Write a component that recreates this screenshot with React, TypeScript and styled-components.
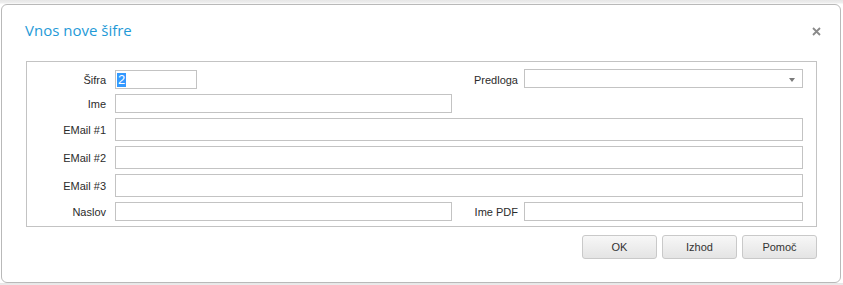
import React from "react";
import styled, { createGlobalStyle } from "styled-components";

const Global = createGlobalStyle`
  html, body { margin: 0; padding: 0; }
  body {
    background: linear-gradient(#e6e6e6 0, #efefef 3px, #ffffff 4px);
    font-family: "Liberation Sans", Arial, sans-serif;
  }
`;

const Page = styled.div`
  padding: 4px 0 0 1px;
`;

const Dialog = styled.div`
  box-sizing: border-box;
  width: 840px;
  height: 279px;
  background: #fff;
  border: 1px solid #b9b9b9;
  border-radius: 6px;
  display: flex;
  flex-direction: column;
`;

const Header = styled.div`
  display: flex;
  justify-content: space-between;
  align-items: flex-start;
  padding: 15px 19px 0 23px;
`;

const Title = styled.h1`
  margin: 0;
  font-family: "Open Sans", sans-serif;
  font-weight: 400;
  font-size: 15px;
  line-height: 20px;
  color: #1f9ad7;
`;

const Close = styled.button`
  border: 0;
  padding: 0;
  background: none;
  margin-top: 7px;
  width: 9px;
  height: 9px;
  display: flex;
  cursor: pointer;
`;

const Body = styled.div`
  padding: 21px 23px 0 24px;
  display: flex;
  flex-direction: column;
`;

const Fieldset = styled.div`
  box-sizing: border-box;
  border: 1px solid #c3c3c3;
  padding: 8px 13px 5px 0;
  display: grid;
  grid-template-columns: 88px 337px 72px 279px;
  grid-template-rows: 19px 19px 23px 23px 23px 19px;
  row-gap: 5px;
`;

const Label = styled.label<{ $gap?: number }>`
  box-sizing: border-box;
  display: flex;
  align-items: center;
  justify-content: flex-end;
  padding-right: ${(p) => p.$gap ?? 9}px;
  font-size: 11px;
  color: #2b2b2b;
  white-space: nowrap;
`;

const Input = styled.input<{ $span?: string }>`
  box-sizing: border-box;
  grid-column: ${(p) => p.$span ?? "auto"};
  width: 100%;
  height: 100%;
  margin: 0;
  border: 1px solid #c3c3c3;
  background: #fff;
  font-family: "Liberation Sans", Arial, sans-serif;
  font-size: 12px;
  padding: 0 2px;
  outline: none;
`;

const Box = styled.div<{ $width?: number; $lift?: boolean }>`
  box-sizing: border-box;
  width: ${(p) => (p.$width ? `${p.$width}px` : "100%")};
  height: 19px;
  margin-top: ${(p) => (p.$lift ? "-1px" : "0")};
  border: 1px solid #c3c3c3;
  background: #fff;
  display: flex;
  align-items: center;
  padding: 0 1px;
  position: relative;
`;

const Selected = styled.span`
  background: #3399ff;
  color: #fff;
  font-size: 13px;
  line-height: 14px;
  padding: 0 1px;
  font-family: "Liberation Sans", Arial, sans-serif;
`;

const Arrow = styled.span`
  position: absolute;
  right: 7px;
  top: 8px;
  width: 0;
  height: 0;
  border-left: 3px solid transparent;
  border-right: 3px solid transparent;
  border-top: 4px solid #7a7a7a;
`;

const Empty = styled.div``;

const Buttons = styled.div`
  display: flex;
  justify-content: flex-end;
  gap: 5px;
  margin-top: 8px;
`;

const Button = styled.button`
  box-sizing: border-box;
  width: 75px;
  height: 24px;
  border: 1px solid #c9c9c9;
  border-radius: 3px;
  background: linear-gradient(#f7f7f7, #e4e4e4);
  font-family: "Liberation Sans", Arial, sans-serif;
  font-size: 11px;
  color: #333;
  padding: 0;
  cursor: pointer;
`;

export default function App() {
  return (
    <>
      <Global />
      <Page>
        <Dialog>
          <Header>
            <Title>Vnos nove šifre</Title>
            <Close aria-label="Zapri">
              <svg width="9" height="9" viewBox="0 0 9 9">
                <path d="M1 1L8 8M8 1L1 8" stroke="#8a8a8a" strokeWidth="1.8" />
              </svg>
            </Close>
          </Header>
          <Body>
            <Fieldset>
              <Label>Šifra</Label>
              <Box $width={82}>
                <Selected>2</Selected>
              </Box>
              <Label $gap={6}>Predloga</Label>
              <Box $lift>
                <Arrow />
              </Box>

              <Label>Ime</Label>
              <Input />
              <Empty />
              <Empty />

              <Label>EMail #1</Label>
              <Input $span="2 / 5" />

              <Label>EMail #2</Label>
              <Input $span="2 / 5" />

              <Label>EMail #3</Label>
              <Input $span="2 / 5" />

              <Label>Naslov</Label>
              <Input />
              <Label $gap={6}>Ime PDF</Label>
              <Input />
            </Fieldset>
            <Buttons>
              <Button>OK</Button>
              <Button>Izhod</Button>
              <Button>Pomoč</Button>
            </Buttons>
          </Body>
        </Dialog>
      </Page>
    </>
  );
}
